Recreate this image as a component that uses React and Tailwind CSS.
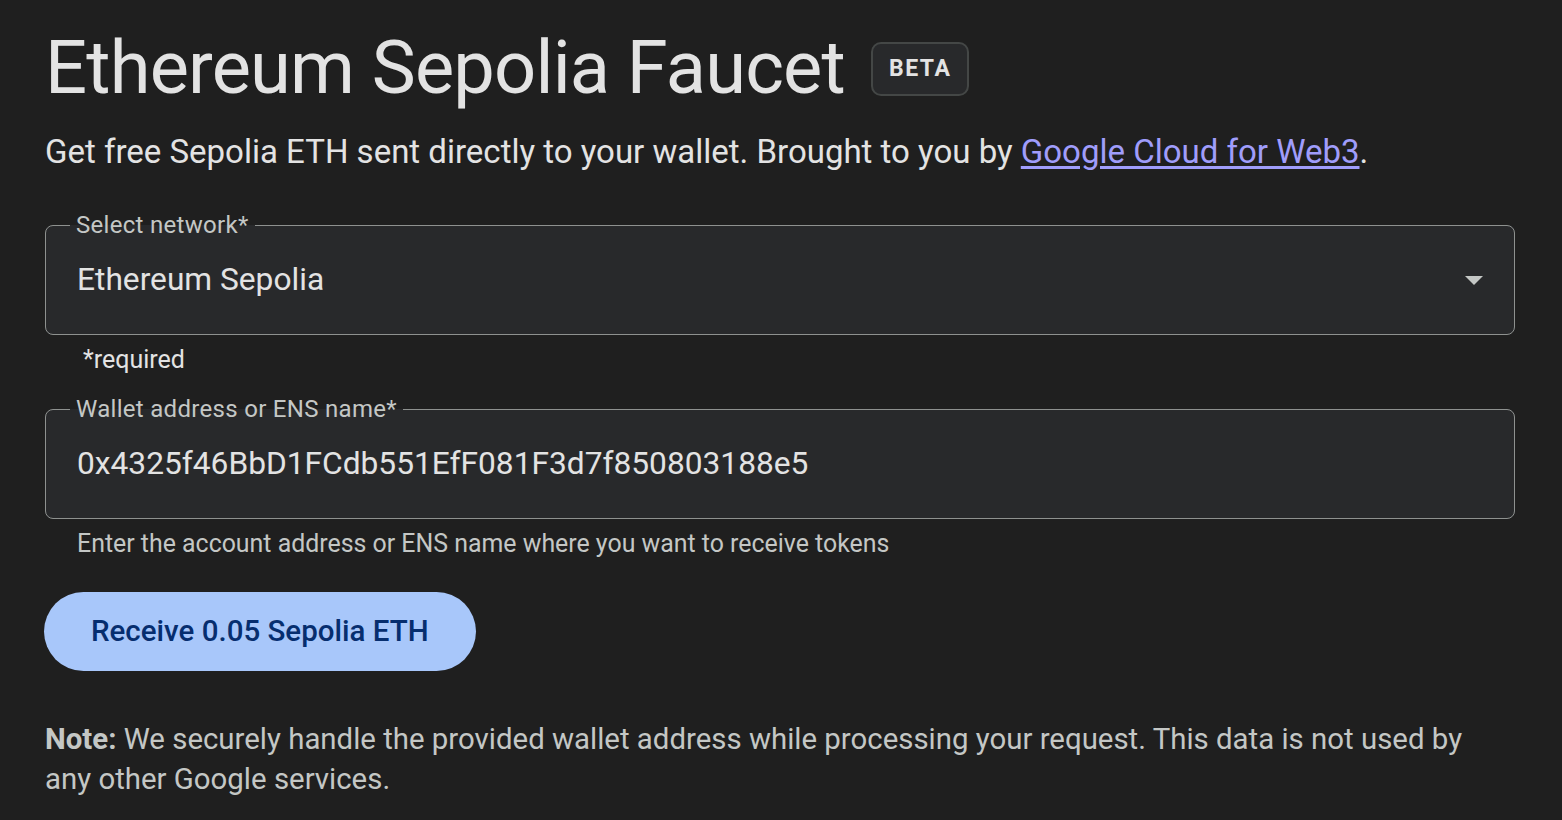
const fontStack = { fontFamily: "Roboto, 'Noto Sans', sans-serif" };

function Field({ label, value, children }) {
  return (
    <fieldset className="rounded-lg border border-[#8e918f] bg-[#28292b] px-[31px]">
      <legend className="ml-[-7px] px-[6px] text-[24px] leading-[24px] tracking-[0.3px] text-[#c4c7c5]">{label}</legend>
      <div className="flex h-[97px] items-center justify-between pb-[11px]">
        <span className="text-[31.7px] text-[#e3e3e3]">{value}</span>
        {children}
      </div>
    </fieldset>
  );
}

export default function App() {
  return (
    <div style={fontStack} className="min-h-[820px] bg-[#1f1f1f] px-[45px] pt-[24px] text-[#e3e3e3]">
      <div className="flex items-center gap-[26px]">
        <h1 className="text-[74px] leading-[88px] font-normal tracking-[-0.8px]">Ethereum Sepolia Faucet</h1>
        <span className="mt-[2px] rounded-[10px] border-2 border-[#444746] bg-[#28292b] px-[16px] py-[9px] text-[23px] leading-[32px] font-bold tracking-[1.5px] text-[#e3e3e3]">
          BETA
        </span>
      </div>

      <p className="mt-[18px] text-[33px] leading-[44px]">
        Get free Sepolia ETH sent directly to your wallet. Brought to you by{" "}
        <a href="#" className="text-[#a09dfb] underline underline-offset-[3px]">Google Cloud for Web3</a>.
      </p>

      <div className="mt-[39px] w-[1470px]">
        <Field label="Select network*" value="Ethereum Sepolia">
          <svg width="18" height="9" viewBox="0 0 18 9">
            <path d="M0 0h18L9 9z" fill="#c4c7c5" />
          </svg>
        </Field>
        <div className="mt-[11px] pl-[38px] text-[25px] leading-[28px] text-[#e3e3e3]">*required</div>

        <div className="mt-[23px]">
          <Field label="Wallet address or ENS name*" value="0x4325f46BbD1FCdb551EfF081F3d7f850803188e5" />
        </div>
        <div className="mt-[11px] pl-[32px] text-[24.9px] leading-[28px] text-[#c4c7c5]">
          Enter the account address or ENS name where you want to receive tokens
        </div>

        <button className="-ml-px mt-[34px] h-[79px] rounded-full bg-[#a8c7fa] px-[47px] text-[29.5px] font-medium text-[#062e6f]">
          Receive 0.05 Sepolia ETH
        </button>

        <p className="mt-[48px] text-[29.4px] leading-[40px] text-[#c4c7c5]">
          <span className="font-bold">Note:</span> We securely handle the provided wallet address while processing your
          request. This data is not used by any other Google services.
        </p>
      </div>
    </div>
  );
}
